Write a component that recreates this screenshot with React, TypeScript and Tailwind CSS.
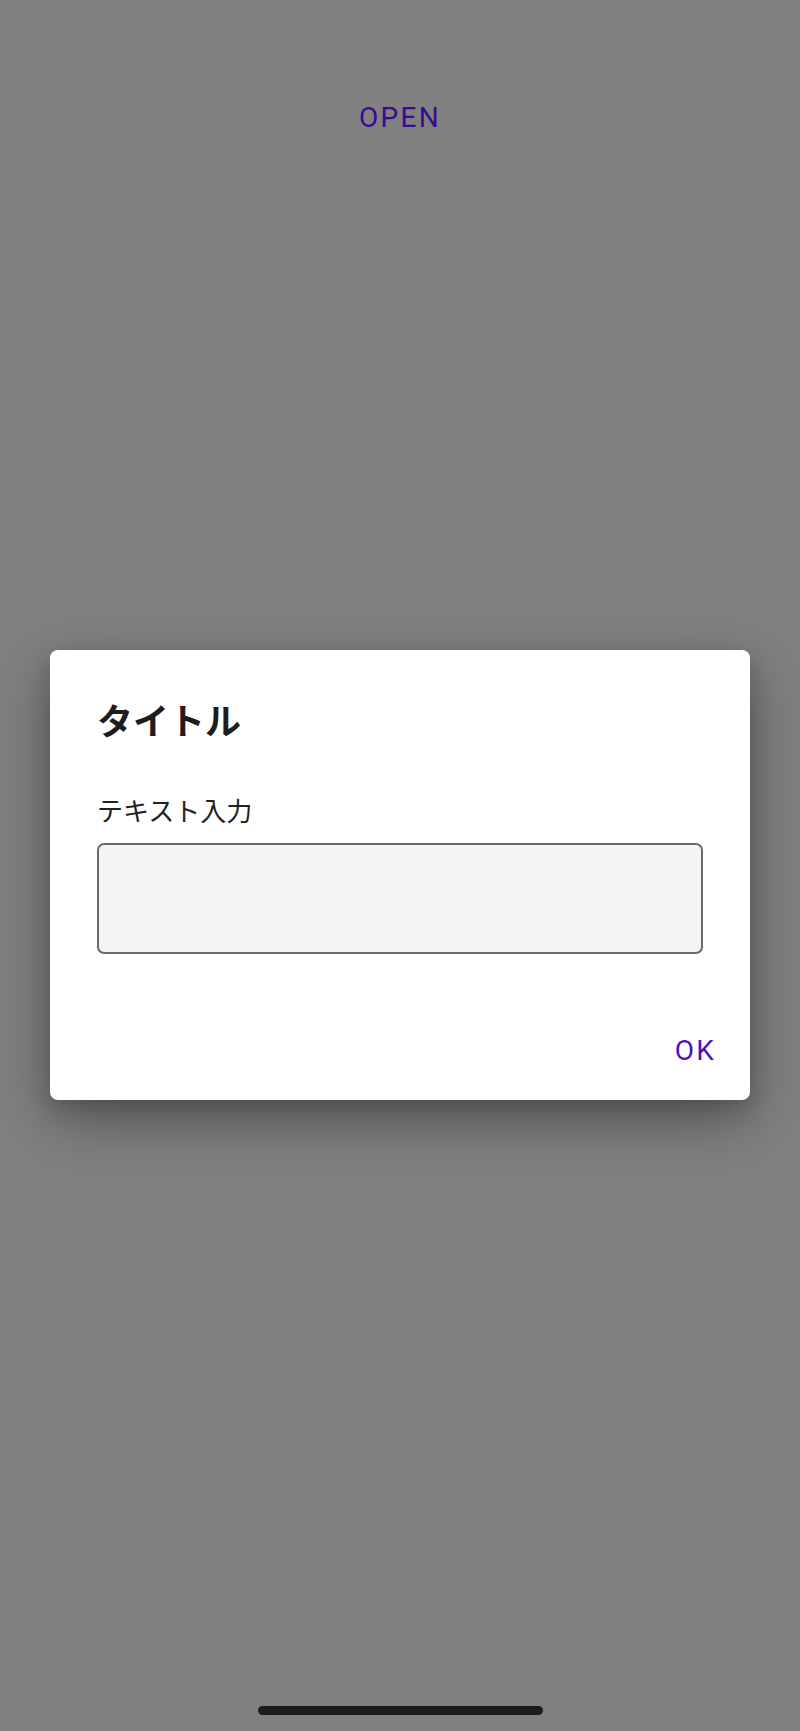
export default function App() {
  return (
    <div className="relative w-[800px] h-[1731px] bg-[#808080] flex flex-col items-center overflow-hidden">
      {/* Screen behind the scrim */}
      <button
        type="button"
        className="mt-[98px] h-[40px] px-4 text-[28px] leading-[40px] font-normal tracking-[0.08em] text-[#3a0a92]"
        style={{ fontFamily: "Roboto, 'Noto Sans', sans-serif" }}
      >
        OPEN
      </button>

      <div className="flex-1" />

      {/* Home indicator */}
      <div className="mb-[16px] w-[285px] h-[9px] rounded-full bg-[#1c1c1c]" />

      {/* Dialog overlay */}
      <div className="absolute inset-x-0 top-0 pt-[650px] flex justify-center">
        <div
          className="w-[700px] h-[450px] bg-white rounded-[8px] shadow-[0_20px_60px_rgba(0,0,0,0.35),0_8px_20px_rgba(0,0,0,0.15)] flex flex-col pl-[47px] pr-[34px] pt-[47px]"
          style={{ fontFamily: "'Noto Sans CJK JP', 'Noto Sans', sans-serif" }}
        >
          <h2 className="text-[36px] leading-[44px] font-bold text-[#1d1d1d]">タイトル</h2>
          <label className="mt-[53px] text-[26px] leading-[32px] text-[#222222]">テキスト入力</label>
          <div className="mt-[17px] mr-[13px] h-[111px] rounded-[7px] border-2 border-[#6a6a6a] bg-[#f5f5f5]" />
          <div className="mt-[81px] flex justify-end">
            <button
              type="button"
              className="text-[28px] leading-[32px] font-normal tracking-[0.08em] text-[#4f12b8]"
              style={{ fontFamily: "Roboto, 'Noto Sans', sans-serif" }}
            >
              OK
            </button>
          </div>
        </div>
      </div>
    </div>
  );
}
